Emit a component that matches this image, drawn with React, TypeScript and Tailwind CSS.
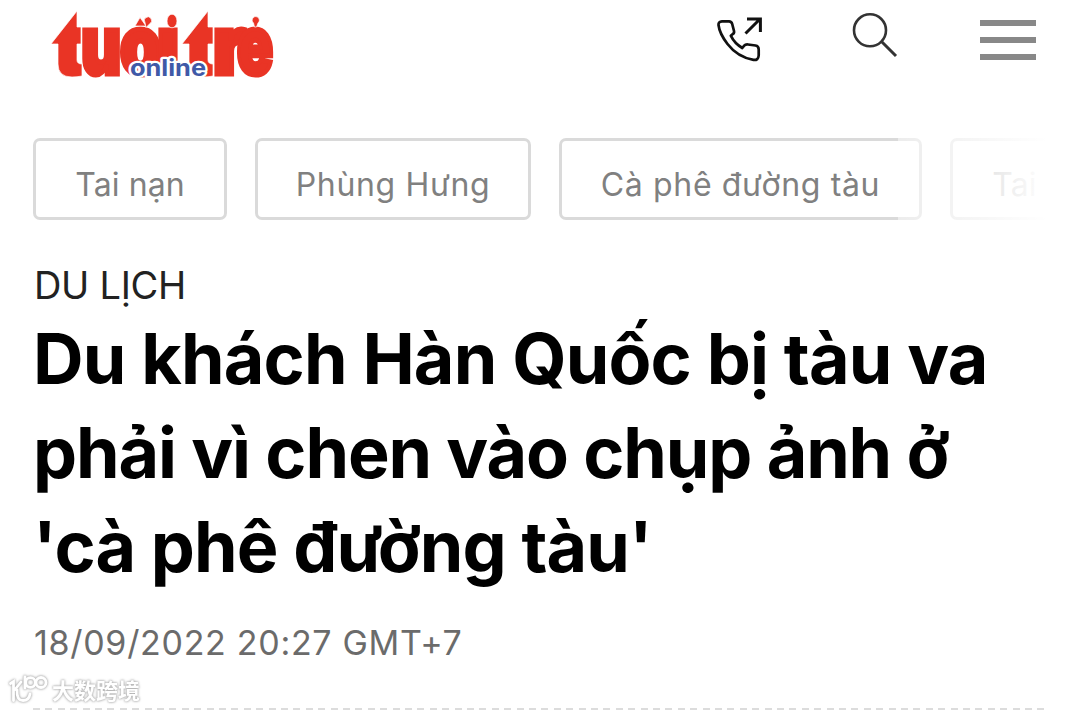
const tags = [
  { label: "Tai nạn", box: "w-[194px] tracking-[0.1px]" },
  { label: "Phùng Hưng", box: "w-[276px] tracking-[0.65px]" },
  { label: "Cà phê đường tàu", box: "w-[363px] tracking-[0.65px]" },
  { label: "Tai nạn", box: "w-[194px] tracking-[0.1px]" },
];

const titleLines = [
  { text: "Du khách Hàn Quốc bị tàu va", spacing: "tracking-[-0.83px]" },
  { text: "phải vì chen vào chụp ảnh ở", spacing: "tracking-[-1.13px]" },
  { text: "'cà phê đường tàu'", spacing: "tracking-[-0.9px]" },
];

// one entry per letter of the wordmark, so each can be squeezed on its own
const logoLetters = [
  { char: "u", x: 31, width: 40 },
  { char: "o", x: 70, width: 41 },
  { char: "ı", x: 107, width: 22 },
  { char: "r", x: 163, width: 33 },
  { char: "e", x: 187, width: 36 },
];

function Logo() {
  return (
    <svg
      width="230"
      height="76"
      viewBox="0 0 230 76"
      role="img"
      aria-label="Tuổi Trẻ Online"
      className="overflow-visible"
    >
      <g fill="#e93425" stroke="#e93425" strokeWidth="5" className="font-['Inter',sans-serif]">
        {logoLetters.map((l) => (
          <text
            key={l.char}
            x={l.x}
            y="66.5"
            fontSize="81"
            fontWeight="900"
            textLength={l.width}
            lengthAdjust="spacingAndGlyphs"
          >
            {l.char}
          </text>
        ))}
      </g>
      <path d="M31.7 20 V62 M163.5 20 V69" stroke="#fff" strokeWidth="0.8" />
      <g fill="#e93425" stroke="#fff" strokeWidth="0.7">
        {/* arrow shaped t */}
        <path d="M1 37 L27 4 V20 H31 V37 H27 V53 Q27 57 32 57 V69 Q27 70 22 70 Q8 70 8 57 V37 Z" />
        <path d="M132 37 L158 4 V20 H163 V37 H158 V53 Q158 57 163 57 V69 Q158 70 153 70 Q139 70 139 57 V37 Z" />
        {/* marks */}
        <path d="M85 19 L90 10.5 L96 19 Z" />
        <path d="M95 15.5 a3.6 3.6 0 1 1 5 1 l-4 4 Z" />
        <ellipse cx="122" cy="14" rx="5" ry="6.8" />
        <path d="M203.5 16 a3.6 3.6 0 1 1 4.5 0 l-1.5 4 h-2 Z" />
      </g>
      <text
        x="80"
        y="68.5"
        fontSize="23"
        fontWeight="700"
        fill="#4059a7"
        stroke="#fff"
        strokeWidth="4.5"
        strokeLinejoin="round"
        paintOrder="stroke"
        textLength="76"
        lengthAdjust="spacingAndGlyphs"
        className="font-['Inter',sans-serif]"
      >
        online
      </text>
    </svg>
  );
}

function PhoneIcon() {
  return (
    <svg width="48" height="48" viewBox="0 0 48 48" fill="none" stroke="#111" strokeWidth="2.7" strokeLinejoin="round">
      <path d="M6 7.3 H13 Q15.5 7.3 16.2 10 L18 17 Q18.5 19 16.8 20 L14.8 21.7 Q18.5 29.5 26.3 34 L28.2 31.7 Q29.5 30.2 32 30.5 L39.5 31.5 Q42.7 32 42.7 35.5 V41.5 Q42.3 46.5 37.5 45.9 Q21.5 43 11.5 30 Q3.5 19.5 2.5 11 Q2.3 7.5 6 7.3 Z" />
      <path d="M29.5 19.5 L44 5 M31 4.9 H44.4 V18" strokeLinejoin="miter" strokeWidth="3" />
    </svg>
  );
}

function SearchIcon() {
  return (
    <svg width="48" height="48" viewBox="0 0 48 48" fill="none" stroke="#333" strokeWidth="2.6">
      <circle cx="20" cy="20.3" r="16" />
      <path d="M31.5 31.5 L46 46" strokeWidth="3" />
    </svg>
  );
}

function Watermark() {
  return (
    <div className="absolute left-[8px] top-[672px] flex items-center gap-[4px] text-white [filter:drop-shadow(0_0_1px_#aaa)_drop-shadow(0_0_1px_#ccc)]">
      <svg width="40" height="32" viewBox="0 0 40 32" fill="none" stroke="#fff" strokeWidth="2.8" strokeLinecap="round">
        <path d="M2.5 10.5 L5.5 8.5 V27.5 M13 9 L7 16.5 M9 17 Q8.5 27.5 15 27.5 Q21 27.5 22 21" />
        <path d="M17 4 V15" />
        <circle cx="22.5" cy="9.5" r="4.8" />
        <circle cx="33" cy="9.5" r="5" />
      </svg>
      <span className="text-[22px] leading-[34px] font-bold font-['Noto_Sans_CJK_SC',sans-serif]">大数跨境</span>
    </div>
  );
}

export default function App() {
  return (
    <div className="relative w-[1080px] h-[710px] overflow-hidden bg-white font-['Inter',sans-serif]">
      <header className="flex h-[138px] items-start pl-[50px] pr-[44px] pt-[7px]">
        <Logo />
        <div className="ml-auto flex items-start">
          <button className="mt-[7px] mr-[86px]" aria-label="Hotline">
            <PhoneIcon />
          </button>
          <button className="mt-[3px] mr-[82px]" aria-label="Search">
            <SearchIcon />
          </button>
          <button className="mt-[13px] flex w-[56px] flex-col gap-[11px]" aria-label="Menu">
            <span className="h-[6px] bg-[#888]" />
            <span className="h-[6px] bg-[#888]" />
            <span className="h-[6px] bg-[#888]" />
          </button>
        </div>
      </header>

      <nav className="relative ml-[33px] flex w-[1014px] gap-[28px] overflow-hidden">
        {tags.map((tag, i) => (
          <a
            key={i}
            className={`${tag.box} flex h-[82px] shrink-0 items-center justify-center whitespace-nowrap rounded-[7px] border-3 border-[#dadada] pt-[12px] text-[32px] text-[#808080]`}
          >
            {tag.label}
          </a>
        ))}
        <div className="absolute inset-y-0 right-0 w-[149px] bg-linear-to-r from-white/50 to-white" />
      </nav>

      <article className="ml-[33px] w-[1014px]">
        <p className="mt-[40px] h-[53px] pl-[1px] text-[38px] leading-[50px] tracking-[-0.3px] text-[#222]">DU LỊCH</p>
        <h1 className="-mt-px text-[70px] leading-[94px] font-bold text-black">
          {titleLines.map((line) => (
            <span key={line.text} className={`block whitespace-nowrap ${line.spacing}`}>
              {line.text}
            </span>
          ))}
        </h1>
        <p className="mt-[22px] h-[60px] pl-[1px] text-[34px] leading-[54px] tracking-[0.7px] text-[#6b6b6b]">
          18/09/2022 20:27 GMT+7
        </p>
        <div className="mt-[32px] h-[2px] bg-[repeating-linear-gradient(90deg,#dcdcdc_0_7px,transparent_7px_12.4px)]" />
      </article>

      <Watermark />
    </div>
  );
}
